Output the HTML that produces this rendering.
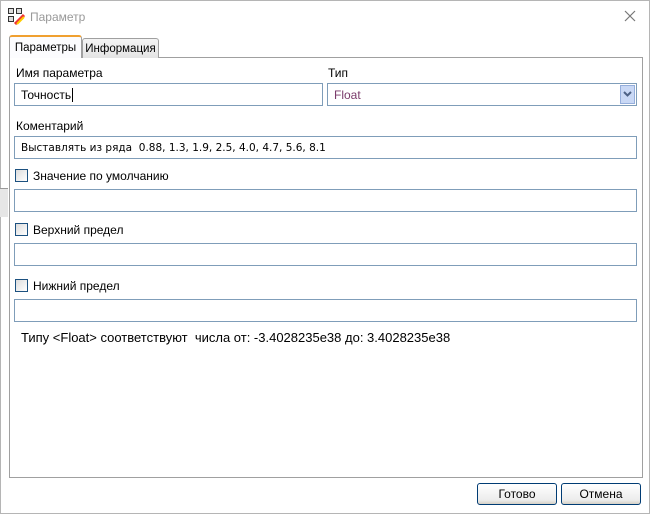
<!DOCTYPE html>
<html><head><meta charset="utf-8"><style>
body{margin:0;width:650px;height:514px;background:#fff;font-family:"Liberation Sans","DejaVu Sans",sans-serif;font-size:12px;position:relative;overflow:hidden}
.a{position:absolute}
.in{position:absolute;border:1px solid #7f9db9;background:#fff;box-sizing:border-box;height:23px;line-height:23px;padding-left:6px;font-size:12px}
.cb{position:absolute;width:13px;height:13px;border:1px solid #1c5180;box-sizing:border-box;background:linear-gradient(135deg,#dcdcdc,#fff)}
.lb{position:absolute;font-size:12px;color:#000}
.btn{position:absolute;height:22px;width:80px;border:1px solid #003c74;border-radius:3px;box-sizing:border-box;background:linear-gradient(#fff,#ececec 80%,#d6d0c5);text-align:center;line-height:21px;font-size:12px}
</style></head><body>
<div class="a" style="left:0;top:0;width:650px;height:514px;border:1px solid #b5b5b5;box-sizing:border-box"></div>
<div class="a" style="left:0;top:188px;width:8px;height:28px;background:#e6e6e6;border-top:1px solid #999"></div>
<svg class="a" style="left:8px;top:8px" width="17" height="17" viewBox="0 0 17 17">
<rect x="0" y="0" width="6" height="6" fill="#333"/><rect x="8" y="0" width="6" height="6" fill="#333"/><rect x="0" y="8" width="6" height="6" fill="#333"/>
<rect x="1" y="1" width="4" height="4" fill="#ddd"/><rect x="9" y="1" width="4" height="4" fill="#ddd"/><rect x="1" y="9" width="4" height="4" fill="#ddd"/>
<path d="M7 16 L16 7" stroke="#e33" stroke-width="3"/><path d="M9 16 L16 9" stroke="#fc0" stroke-width="2"/></svg>
<div class="a" style="left:30px;top:10px;color:#999;font-size:12px">Параметр</div>
<svg class="a" style="left:624px;top:10px" width="12" height="12" viewBox="0 0 12 12"><path d="M1 1L11 11M11 1L1 11" stroke="#777" stroke-width="1.2"/></svg>
<div class="a" style="left:9px;top:57px;width:634px;height:421px;border:1px solid #a0a0a0;box-sizing:border-box;background:#fff"></div>
<div class="a" style="left:82px;top:38px;width:77px;height:20px;border:1px solid #a0a0a0;border-bottom:none;border-radius:3px 3px 0 0;box-sizing:border-box;background:linear-gradient(#f4f4f4,#e4e4e4);line-height:20px;text-align:center;font-size:11.5px">Информация</div>
<div class="a" style="left:9px;top:35px;width:73px;height:23px;border:1px solid #a0a0a0;border-top:2px solid #f0a030;border-bottom:none;border-radius:3px 3px 0 0;box-sizing:border-box;background:#fcfcfe;line-height:23px;text-align:center;font-size:11.5px">Параметры</div>
<div class="lb" style="left:16px;top:66px">Имя параметра</div>
<div class="in" style="left:14px;top:83px;width:309px">Точность<span style="border-left:1px solid #000;margin-left:1px"></span></div>
<div class="lb" style="left:328px;top:66px">Тип</div>
<div class="in" style="left:327px;top:83px;width:310px;color:#7a3a6a">Float</div>
<div class="a" style="left:620px;top:85px;width:15px;height:19px;background:#c9d8f5;border:1px solid #95aedb;box-sizing:border-box"></div>
<svg class="a" style="left:623px;top:91px" width="9" height="6" viewBox="0 0 9 6"><path d="M1 1L4.5 4.5L8 1" stroke="#4d6185" stroke-width="2" fill="none"/></svg>
<div class="lb" style="left:16px;top:119px">Коментарий</div>
<div class="in" style="left:14px;top:136px;width:623px;font-family:'DejaVu Sans',sans-serif;font-size:10.5px;line-height:22px">Выставлять из ряда &nbsp;0.88, 1.3, 1.9, 2.5, 4.0, 4.7, 5.6, 8.1</div>
<div class="cb" style="left:15px;top:169px"></div><div class="lb" style="left:33px;top:169px">Значение по умолчанию</div>
<div class="in" style="left:14px;top:189px;width:623px"></div>
<div class="cb" style="left:15px;top:223px"></div><div class="lb" style="left:33px;top:223px">Верхний предел</div>
<div class="in" style="left:14px;top:243px;width:623px"></div>
<div class="cb" style="left:15px;top:279px"></div><div class="lb" style="left:33px;top:279px">Нижний предел</div>
<div class="in" style="left:14px;top:299px;width:623px"></div>
<div class="lb" style="left:21px;top:330px;font-size:13px">Типу &lt;Float&gt; соответствуют &nbsp;числа от: -3.4028235e38 до: 3.4028235e38</div>
<div class="btn" style="left:477px;top:483px">Готово</div>
<div class="btn" style="left:561px;top:483px">Отмена</div>
</body></html>
